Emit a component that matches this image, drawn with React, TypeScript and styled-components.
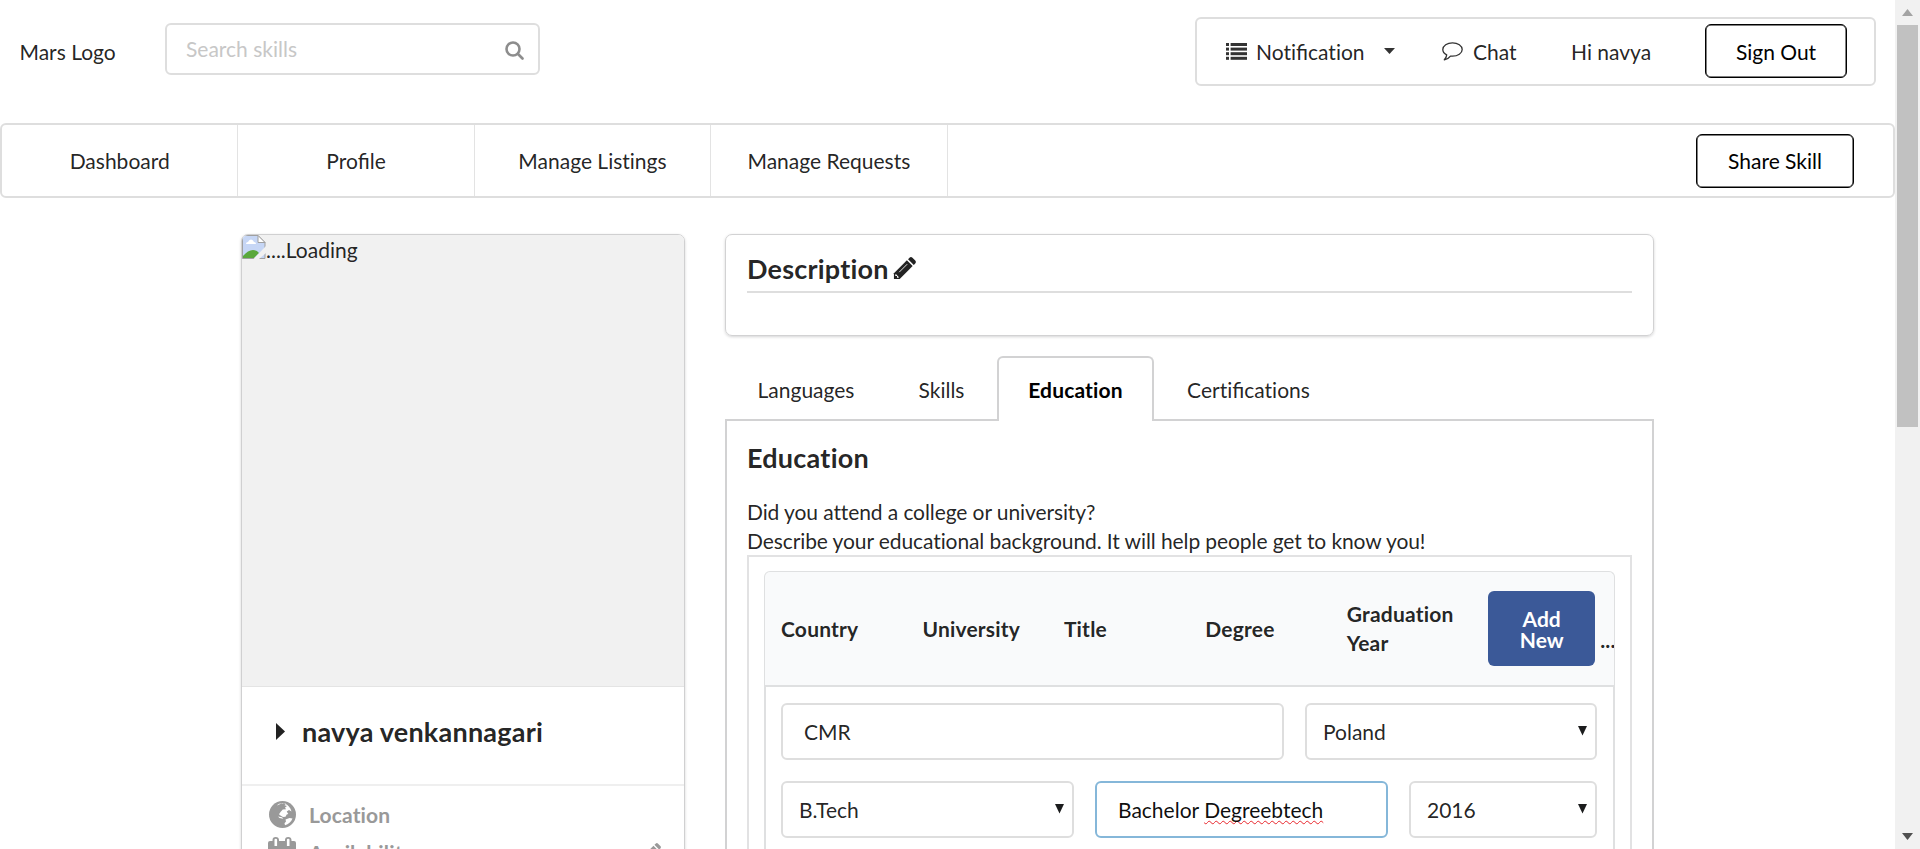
import React from "react";
import styled, { createGlobalStyle, css } from "styled-components";

const Global = createGlobalStyle`
  * { box-sizing: border-box; }
  html, body { margin: 0; height: 849px; overflow: hidden; background: #fff; }
  body, input, button {
    font-family: Lato, "Helvetica Neue", Arial, sans-serif;
    font-size: 21px;
    line-height: 29px;
    color: rgba(0, 0, 0, 0.87);
    font-variant-ligatures: none;
  }
`;

const Screen = styled.div`
  display: flex;
  width: 1920px;
  height: 849px;
  overflow: hidden;
`;

const Page = styled.div`
  width: 1895px;
  height: 849px;
  overflow: hidden;
`;

const Header = styled.header`
  display: flex;
  height: 123px;
`;

const Logo = styled.div`
  width: 165px;
  padding: 37px 0 0 19.5px;
`;

const Search = styled.div`
  display: flex;
  align-items: center;
  justify-content: space-between;
  width: 375px;
  height: 52px;
  margin-top: 23px;
  padding: 0 14px 0 19px;
  border: 2px solid #dedede;
  border-radius: 6px;
  svg { margin-top: 3px; }
`;

const SearchInput = styled.input`
  width: 280px;
  margin-top: -2px;
  padding: 0;
  border: 0;
  outline: 0;
  &::placeholder { color: #c7c7c7; opacity: 1; }
`;

const UserMenu = styled.div`
  display: flex;
  align-items: center;
  width: 681px;
  height: 69px;
  margin: 17px 0 0 655px;
  padding: 0 0 1px 29px;
  border: 2px solid #dedede;
  border-radius: 6px;
`;

const MenuItem = styled.div<{ $width: number }>`
  display: flex;
  align-items: center;
  width: ${(p) => p.$width}px;
  white-space: nowrap;
`;

const Label = styled.span<{ $left?: number; $right?: number }>`
  margin-left: ${(p) => p.$left ?? 0}px;
  margin-right: ${(p) => p.$right ?? 0}px;
`;

const Ligature = styled.span`
  font-variant-ligatures: common-ligatures;
`;

const OutlineButton = styled.button<{ $width: number }>`
  width: ${(p) => p.$width}px;
  height: 54px;
  padding: 0;
  color: #000;
  background: #fff;
  border: 1.5px solid #000;
  border-radius: 6px;
  box-shadow: inset 0 0 0 0.5px #000;
`;

const Nav = styled.nav`
  display: flex;
  align-items: center;
  width: 1895px;
  height: 75px;
  border: 2px solid #dedede;
  border-radius: 6px;
`;

const NavItem = styled.a`
  display: flex;
  align-items: center;
  justify-content: center;
  width: 236.4px;
  height: 100%;
  padding-bottom: 1px;
  border-right: 1px solid #e3e3e3;
`;

const NavAction = styled.div`
  margin-left: auto;
  padding-right: 39px;
`;

const Main = styled.main`
  display: flex;
  align-items: flex-start;
  gap: 40px;
  padding: 36px 0 0 241px;
`;

const ProfileCard = styled.section`
  width: 444px;
  height: 700px;
  border: 1px solid #d0d0d1;
  border-radius: 7px;
  box-shadow: 0 1px 3px #d4d4d5;
  overflow: hidden;
`;

const Photo = styled.div`
  display: flex;
  align-items: flex-start;
  height: 451px;
  background: #f1f1f1;
`;

const NameRow = styled.div`
  display: flex;
  align-items: center;
  height: 100px;
  padding: 0 0 7px 33px;
  border-top: 1px solid #e4e4e4;
  border-bottom: 2px solid #efefef;
  font-size: 27px;
  font-weight: 700;
  line-height: 34px;
  letter-spacing: 0.22px;
  svg { width: 11px; margin: -2px 16px 0 0; flex: none; }
`;

const Details = styled.div`
  padding: 9px 23px 0 25px;
  color: #999;
  font-weight: 700;
  letter-spacing: 0.15px;
`;

const DetailRow = styled.div`
  display: flex;
  align-items: center;
  height: 38px;
`;

const DetailIcon = styled.span`
  display: flex;
  justify-content: center;
  width: 30px;
  margin-right: 12px;
`;

const Push = styled.span`
  display: flex;
  margin-left: auto;
`;

const Content = styled.div`
  width: 929px;
`;

const DescriptionCard = styled.section`
  height: 102px;
  padding: 17px 21px 0;
  border: 1px solid #d2d2d3;
  border-radius: 7px;
  box-shadow: 0 1px 3px #d4d4d5;
`;

const CardTitle = styled.h3`
  display: flex;
  align-items: center;
  height: 41px;
  margin: 0;
  padding-bottom: 6px;
  border-bottom: 2px solid #dedede;
  font-size: 27px;
  font-weight: 700;
  letter-spacing: 0.2px;
  svg { margin-left: 4px; }
`;

const Tabs = styled.div`
  display: flex;
  position: relative;
  z-index: 1;
  height: 65px;
  margin: 20px 0 -2px;
  padding-left: 1px;
`;

const tabActive = css`
  border: 2px solid #d2d2d3;
  border-bottom: 0;
  border-radius: 6px 6px 0 0;
  background: #fff;
  color: #000;
  font-weight: 700;
  letter-spacing: 0.15px;
`;

const Tab = styled.a<{ $width: number; $active?: boolean }>`
  display: flex;
  align-items: flex-start;
  justify-content: center;
  width: ${(p) => p.$width}px;
  height: 65px;
  padding-top: ${(p) => (p.$active ? 17 : 19)}px;
  ${(p) => p.$active && tabActive}
`;

const Segment = styled.section`
  width: 929px;
  height: 450px;
  padding: 20px 20px 0 20px;
  border: 2px solid #d2d2d3;
`;

const SegmentTitle = styled.h3`
  margin: 0;
  font-size: 27px;
  line-height: 34px;
  font-weight: 700;
  letter-spacing: 0.25px;
`;

const Intro = styled.p`
  margin: 22px 0 0;
  letter-spacing: -0.095px;
`;

const TableFrame = styled.div`
  height: 330px;
  padding: 14px 15px 0;
  border: 2px solid #e2e2e3;
`;

const TableHead = styled.div`
  display: grid;
  grid-template-columns: repeat(5, 141.45px) 1fr;
  align-items: center;
  height: 114px;
  padding: 0 0 1px 16px;
  background: #f9fafb;
  border: 1px solid #dfe0e1;
  border-bottom: 0;
  border-radius: 6px 6px 0 0;
  font-weight: 700;
  letter-spacing: 0.2px;
  overflow: hidden;
`;

const HeadAction = styled.div`
  display: flex;
  align-items: flex-end;
  overflow: hidden;
`;

const AddButton = styled.button`
  flex: none;
  width: 107px;
  height: 75px;
  padding: 2px 20px 0;
  border: 0;
  border-radius: 6px;
  background: #3b5998;
  color: #fff;
  font-weight: 700;
  line-height: 21px;
`;

const Ellipsis = styled.span`
  width: 15px;
  margin: 0 0 12px 5px;
  overflow: hidden;
`;

const TableBody = styled.div`
  display: flex;
  flex-direction: column;
  gap: 21px;
  height: 210px;
  padding: 16px 15px 0;
  border: 2px solid #dfe0e1;
`;

const FieldRow = styled.div`
  display: flex;
  gap: 21px;
`;

const Field = styled.div<{ $width: number; $inset?: number; $focus?: boolean }>`
  display: flex;
  align-items: center;
  justify-content: space-between;
  width: ${(p) => p.$width}px;
  height: 57px;
  padding: 0 8px 0 ${(p) => p.$inset ?? 16}px;
  border: 2px solid ${(p) => (p.$focus ? "#85b7d9" : "#dedede")};
  border-radius: 6px;
  color: ${(p) => (p.$focus ? "rgba(0,0,0,.95)" : "rgba(0,0,0,.87)")};
  svg { margin-top: -2px; }
`;

const Misspelled = styled.span`
  text-decoration: underline wavy #e8262c 1.1px;
  text-underline-offset: 2px;
  text-decoration-skip-ink: none;
`;

const ScrollBar = styled.div`
  display: flex;
  flex-direction: column;
  align-items: center;
  width: 25px;
  height: 849px;
  background: #f1f1f1;
`;

const ScrollArrow = styled.div`
  display: flex;
  align-items: center;
  justify-content: center;
  height: 25px;
`;

const Thumb = styled.div`
  width: 21px;
  height: 402px;
  margin-bottom: auto;
  background: #c1c1c1;
`;

const SearchIcon = () => (
  <svg width="19" height="19" viewBox="0 0 19 19" fill="none" stroke="#8d8d8d" strokeWidth="2.6" strokeLinecap="round">
    <circle cx="8" cy="8" r="6.5" />
    <path d="m13 13 4.500 4.500" />
  </svg>
);

const ListIcon = () => (
  <svg width="21" height="17" viewBox="0 0 21 17" fill="#333">
    {[0, 4.6, 9.2, 13.8].map((y) => (
      <g key={y}>
        <rect x="0" y={y} width="3" height="3" />
        <rect x="4.600" y={y} width="16.400" height="3" />
      </g>
    ))}
  </svg>
);

const CaretDown = () => (
  <svg width="11" height="6" viewBox="0 0 11 6"><path d="M0 0h11L5.500 6Z" fill="#333" /></svg>
);

const ChatIcon = () => (
  <svg width="21" height="19" viewBox="0 0 21 19" fill="none" stroke="#333" strokeWidth="1.3" strokeLinejoin="round">
    <path d="M10.500.800C5.200.800.800 3.800.800 7.500c0 2.300 1.500 4.200 3.900 5.400-.2 2-.9 3.400-2.400 4.900 2.900-.6 4.700-1.700 6.200-3.700.7.100 1.300.1 2 .1 5.300 0 9.700-3 9.700-6.700S15.800.800 10.500.800Z" />
  </svg>
);

const PencilIcon = ({ size, color }: { size: number; color: string }) => (
  <svg width={size} height={size} viewBox="0 0 24 24" fill={color}>
    <path d="M1 17 14.500 3.500l6 6L7 23H1Z" />
    <path d="m15.700 2.300 1.500-1.500c.9-.9 2.200-.9 3.100 0l2.900 2.900c.9.900.9 2.200 0 3.100l-1.500 1.500Z" />
    <path d="m3 17.800 3.200 3.200-.7.600H4.200v-1.800H2.400v-1.300Z" fill="#fff" />
    <path d="M6.500 15.800 14.800 7.500" stroke="#fff" strokeWidth=".9" />
  </svg>
);

const GlobeIcon = () => (
  <svg width="27" height="27" viewBox="0 0 27 27">
    <circle cx="13.500" cy="13.500" r="13.500" fill="#999" />
    <path d="M8 4.500 13 2.300l4 .2-1.500 1.800 2.500.700-2 1.500 1 1.700-3.200.3-2.300 2.500-1.500 2.200 1.500 1.300 2.500 1.500 2.500-.3 1.200-2.200 1.600-.6-1.600-2.400 2.300-1.500 2.500 1.500-1-2.700C19.500 4 17 2.300 13.500 2.200 11 2.100 9 2.900 8 4.500Z" fill="#fff" />
    <path d="m16.500 18.500 4-1.500 3 .5c-1.500 3.500-4 5.800-7.500 6.700l-.5-2 1.500-1.700Z" fill="#fff" />
    <path d="m9 15.500 4 .7 1.300 1.600-1.300-.3-2.500-.5Z" fill="#fff" />
  </svg>
);

const CalendarIcon = () => (
  <svg width="30" height="30" viewBox="0 0 30 30" fill="#999">
    <path fillRule="evenodd" d="M3 4h2.500V3q0-3 3.200-3T12 3v1h6V3q0-3 3.200-3t3.300 3v1H27q2 0 2 2v22q0 2-2 2H3q-2 0-2-2V6q0-2 2-2ZM7.500 2.700V9h2.600V2.700q0-.9-1.300-.9t-1.300.9Zm12.400 0V9h2.600V2.700q0-.9-1.300-.9t-1.300.9ZM4 12v15h22V12Z" />
  </svg>
);

const BrokenImage = () => (
  <svg width="24" height="24" viewBox="0 0 24 24">
    <path d="M.5.500H16l7 7V23.500H.5Z" fill="#c6d6f5" stroke="#a0a0a0" />
    <path d="M16 .5v7h7Z" fill="#fff" stroke="#a0a0a0" />
    <path d="M4 9q0-2 2-2 1-2.500 3-2.500t3 2.500q2 0 2 2H4Z" fill="#fff" />
    <path d="M1 23v-2q5-6 10-6 4 0 6 3l-5 5Z" fill="#5aa83c" />
    <path d="M24 11 11.500 24h5.500l7-6Z" fill="#f1f1f1" />
  </svg>
);

const SelectArrow = () => (
  <svg width="9" height="10" viewBox="0 0 9 10"><path d="M0 0h9L4.500 9.500Z" fill="#1b1c1d" /></svg>
);

const columns = ["Country", "University", "Title", "Degree", "Graduation Year"];

export default function App() {
  return (
    <Screen>
      <Global />
      <Page>
        <Header>
          <Logo>Mars Logo</Logo>
          <Search>
            <SearchInput placeholder="Search skills" />
            <SearchIcon />
          </Search>
          <UserMenu>
            <MenuItem $width={216}>
              <ListIcon />
              <Label $left={9} $right={19}>Noti<Ligature>fi</Ligature>cation</Label>
              <CaretDown />
            </MenuItem>
            <MenuItem $width={129}>
              <ChatIcon />
              <Label $left={10}>Chat</Label>
            </MenuItem>
            <MenuItem $width={134}>Hi navya</MenuItem>
            <OutlineButton $width={142}>Sign Out</OutlineButton>
          </UserMenu>
        </Header>
        <Nav>
          <NavItem>Dashboard</NavItem>
          <NavItem><span>Pro<Ligature>fi</Ligature>le</span></NavItem>
          <NavItem>Manage Listings</NavItem>
          <NavItem>Manage Requests</NavItem>
          <NavAction>
            <OutlineButton $width={158}>Share Skill</OutlineButton>
          </NavAction>
        </Nav>
        <Main>
          <ProfileCard>
            <Photo>
              <BrokenImage />
              ....Loading
            </Photo>
            <NameRow>
              <svg width="11" height="17" viewBox="0 0 11 17"><path d="M1 0l9 8.500L1 17Z" fill="#222" /></svg>
              navya venkannagari
            </NameRow>
            <Details>
              <DetailRow>
                <DetailIcon><GlobeIcon /></DetailIcon>
                Location
              </DetailRow>
              <DetailRow>
                <DetailIcon><CalendarIcon /></DetailIcon>
                Availability
                <Push><PencilIcon size={19} color="#999" /></Push>
              </DetailRow>
            </Details>
          </ProfileCard>
          <Content>
            <DescriptionCard>
              <CardTitle>Description<PencilIcon size={23} color="#222" /></CardTitle>
            </DescriptionCard>
            <Tabs>
              <Tab $width={160}>Languages</Tab>
              <Tab $width={111}>Skills</Tab>
              <Tab $width={157} $active>Education</Tab>
              <Tab $width={189}><span>Certi<Ligature>fi</Ligature>cations</span></Tab>
            </Tabs>
            <Segment>
              <SegmentTitle>Education</SegmentTitle>
              <Intro>
                Did you attend a college or university?
                <br />
                Describe your educational background. It will help people get to know you!
              </Intro>
              <TableFrame>
                <TableHead>
                  {columns.map((c) => <span key={c}>{c}</span>)}
                  <HeadAction>
                    <AddButton>Add New</AddButton>
                    <Ellipsis>...</Ellipsis>
                  </HeadAction>
                </TableHead>
                <TableBody>
                  <FieldRow>
                    <Field $width={503} $inset={21}>CMR</Field>
                    <Field $width={292}>Poland<SelectArrow /></Field>
                  </FieldRow>
                  <FieldRow>
                    <Field $width={293}>B.Tech<SelectArrow /></Field>
                    <Field $width={293} $inset={21} $focus>
                      <span>Bachelor <Misspelled>Degreebtech</Misspelled></span>
                    </Field>
                    <Field $width={188}>2016<SelectArrow /></Field>
                  </FieldRow>
                </TableBody>
              </TableFrame>
            </Segment>
          </Content>
        </Main>
      </Page>
      <ScrollBar>
        <ScrollArrow><svg width="11" height="7"><path d="M0 7 5.500 0 11 7Z" fill="#a3a3a3" /></svg></ScrollArrow>
        <Thumb />
        <ScrollArrow><svg width="11" height="7"><path d="M0 0h11L5.500 7Z" fill="#505050" /></svg></ScrollArrow>
      </ScrollBar>
    </Screen>
  );
}
